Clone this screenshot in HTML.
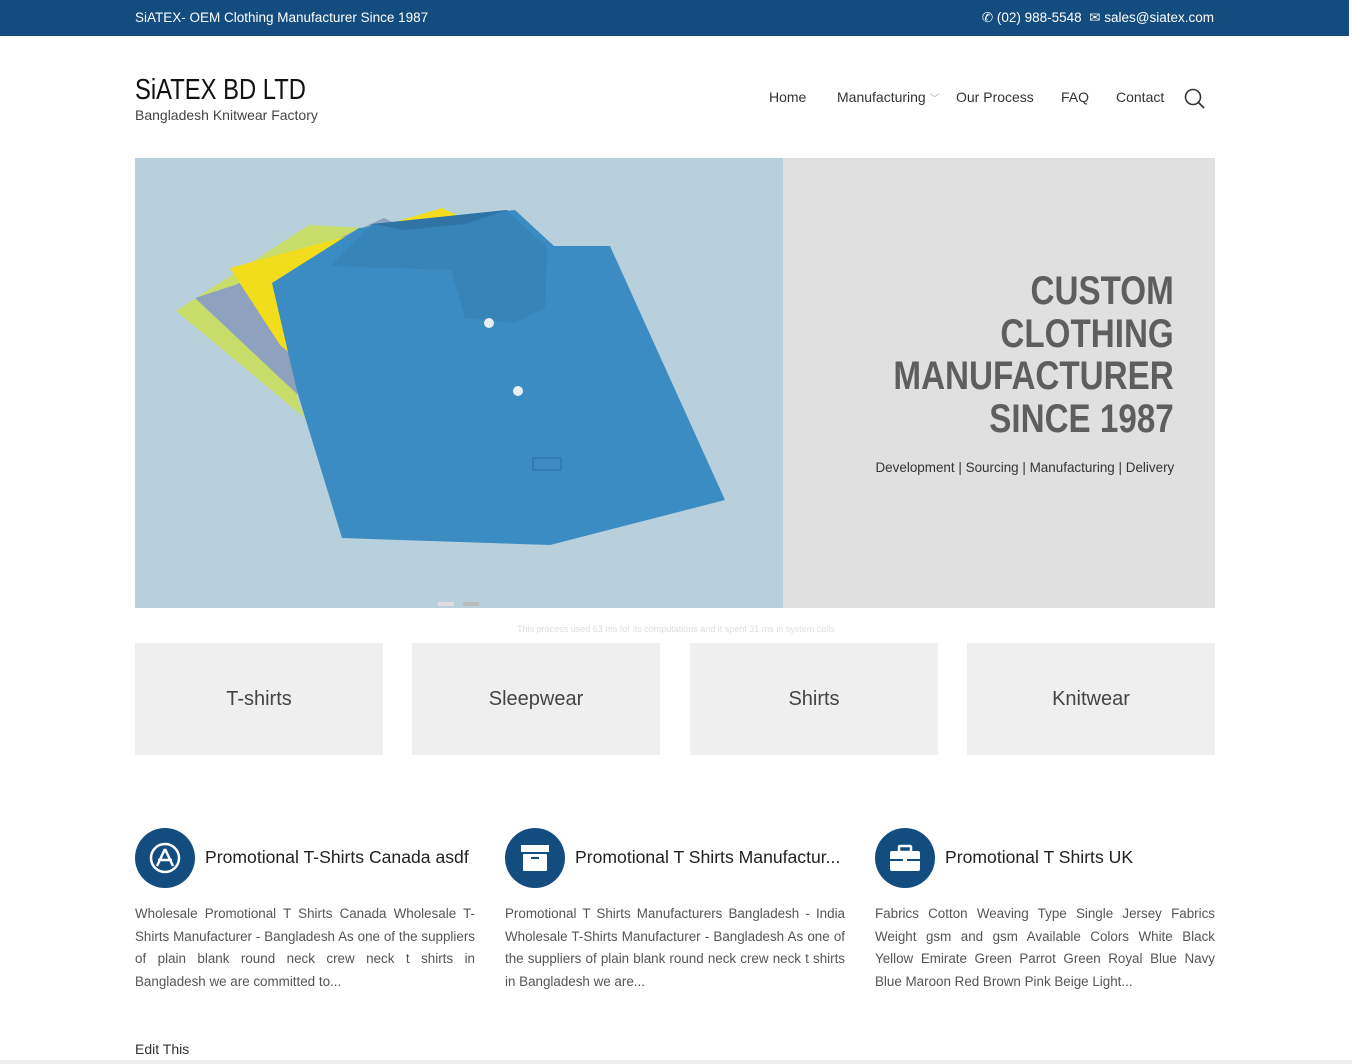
<!DOCTYPE html>
<html><head><meta charset="utf-8"><style>
*{margin:0;padding:0;box-sizing:border-box}
body{width:1352px;height:1064px;background:#fff;font-family:"Liberation Sans",sans-serif;position:relative;overflow:hidden;color:#333}
.top{position:absolute;left:0;top:0;width:1349px;height:36px;background:#134d7f;color:#fff;font-size:13.5px}
.top .l{position:absolute;left:135px;top:10px}
.top .r{position:absolute;right:135px;top:10px}
.logo{position:absolute;left:135px;top:74px;font-size:29px;color:#111;transform:scaleX(0.82);transform-origin:left;white-space:nowrap}
.sub{position:absolute;left:135px;top:107px;font-size:14px;color:#444}
.nav{position:absolute;top:89px;font-size:14px;color:#333}
.hero{position:absolute;left:135px;top:158px;width:1080px;height:450px;background:#e0e0e0}
.hl{position:absolute;right:41px;top:112px;text-align:right;font-size:40px;line-height:42.5px;color:#5e5e5e;font-weight:bold;transform:scaleX(0.83);transform-origin:right;white-space:nowrap}
.hs{position:absolute;right:41px;top:301px;font-size:14px;color:#333;transform:scaleX(0.96);transform-origin:right}
.note{position:absolute;top:624px;width:1352px;text-align:center;font-size:9px;color:#ddd}
.cat{position:absolute;top:643px;width:248px;height:112px;background:#efefef;font-size:20px;color:#444;text-align:center;line-height:112px}
.ic{position:absolute;top:828px;width:60px;height:60px;border-radius:50%;background:#134d7f}
.ft{position:absolute;top:847px;font-size:17.6px;color:#222}
.fp{position:absolute;top:903px;width:340px;font-size:13.4px;line-height:22.5px;color:#555;text-align:justify}
</style></head><body>
<div class="top"><span class="l">SiATEX- OEM Clothing Manufacturer Since 1987</span><span class="r">✆ (02) 988-5548 &nbsp;✉ sales@siatex.com</span></div>
<div class="logo">SiATEX BD LTD</div>
<div class="sub">Bangladesh Knitwear Factory</div>
<div class="nav" style="left:769px">Home</div>
<div class="nav" style="left:837px">Manufacturing <span style="color:#aaa;font-size:10px">﹀</span></div>
<div class="nav" style="left:956px">Our Process</div>
<div class="nav" style="left:1061px">FAQ</div>
<div class="nav" style="left:1116px">Contact</div>
<svg style="position:absolute;left:1184px;top:88px" width="22" height="22" viewBox="0 0 22 22"><circle cx="9" cy="9" r="7.5" fill="none" stroke="#333" stroke-width="1.6"/><line x1="14.5" y1="14.5" x2="20" y2="20" stroke="#333" stroke-width="1.8"/></svg>
<div class="hero">
<svg width="648" height="450" style="position:absolute;left:0;top:0" viewBox="0 0 648 450">
<rect width="648" height="450" fill="#b7d0dc"/>
<polygon points="41,153 174,67 230,70 162,240 170,260" fill="#c8dc6a"/>
<polygon points="60,140 100,127 249,60 280,75 162,236" fill="#8ea2c0"/>
<polygon points="95,110 216,77 307,50 328,60 300,90 160,200 145,187" fill="#f2dd1c"/>
<polygon points="137,125 224,70 380,52 419,88 475,88 590,342 415,387 207,380 162,233" fill="#3b8cc2"/>
<polygon points="195,108 237,66 372,52 412,90 410,150 380,165 330,160 316,112" fill="#3784b8"/>
<polygon points="237,66 372,52 330,66 270,72" fill="#2f74a4"/>
<circle cx="354" cy="165" r="5" fill="#e8eef2"/><circle cx="383" cy="233" r="5" fill="#e8eef2"/>
<rect x="398" y="300" width="28" height="12" fill="none" stroke="#2f78aa" stroke-width="1.5"/>
</svg>
<div style="position:absolute;left:303px;top:444px;width:16px;height:4px;background:#ddd"></div>
<div style="position:absolute;left:328px;top:444px;width:16px;height:4px;background:#bbb"></div>
<div class="hl">CUSTOM<br>CLOTHING<br>MANUFACTURER<br>SINCE 1987</div>
<div class="hs">Development | Sourcing | Manufacturing | Delivery</div>
</div>
<div class="note">This process used 63 ms for its computations and it spent 31 ms in system calls</div>
<div class="cat" style="left:135px">T-shirts</div>
<div class="cat" style="left:412px">Sleepwear</div>
<div class="cat" style="left:690px">Shirts</div>
<div class="cat" style="left:967px">Knitwear</div>
<div class="ic" style="left:135px"><svg width="60" height="60"><circle cx="30" cy="30" r="14" fill="none" stroke="#fff" stroke-width="2.5"/><path d="M30 21 L22 38 M30 21 L38 38 M23 32 H37" stroke="#fff" stroke-width="2.5" fill="none"/></svg></div>
<div class="ic" style="left:505px"><svg width="60" height="60"><rect x="16" y="17" width="28" height="7" fill="#fff"/><rect x="18" y="26" width="24" height="17" rx="1" fill="#fff"/><rect x="26" y="29" width="8" height="2" fill="#134d7f"/></svg></div>
<div class="ic" style="left:875px"><svg width="60" height="60"><rect x="24" y="18" width="12" height="6" rx="1" fill="none" stroke="#fff" stroke-width="2.5"/><rect x="15" y="23" width="30" height="20" rx="2" fill="#fff"/><rect x="15" y="31" width="30" height="2" fill="#134d7f"/><rect x="28" y="30" width="4" height="4" fill="#fff"/></svg></div>
<div class="ft" style="left:205px">Promotional T-Shirts Canada asdf</div>
<div class="ft" style="left:575px">Promotional T Shirts Manufactur...</div>
<div class="ft" style="left:945px">Promotional T Shirts UK</div>
<div class="fp" style="left:135px">Wholesale Promotional T Shirts Canada Wholesale T-Shirts Manufacturer - Bangladesh As one of the suppliers of plain blank round neck crew neck t shirts in Bangladesh we are committed to...</div>
<div class="fp" style="left:505px">Promotional T Shirts Manufacturers Bangladesh - India Wholesale T-Shirts Manufacturer - Bangladesh As one of the suppliers of plain blank round neck crew neck t shirts in Bangladesh we are...</div>
<div class="fp" style="left:875px">Fabrics Cotton Weaving Type Single Jersey Fabrics Weight gsm and gsm Available Colors White Black Yellow Emirate Green Parrot Green Royal Blue Navy Blue Maroon Red Brown Pink Beige Light...</div>
<div style="position:absolute;left:135px;top:1041px;font-size:14px;color:#333">Edit This</div>
<div style="position:absolute;left:0;top:1060px;width:1352px;height:4px;background:#eee"></div>
</body></html>
